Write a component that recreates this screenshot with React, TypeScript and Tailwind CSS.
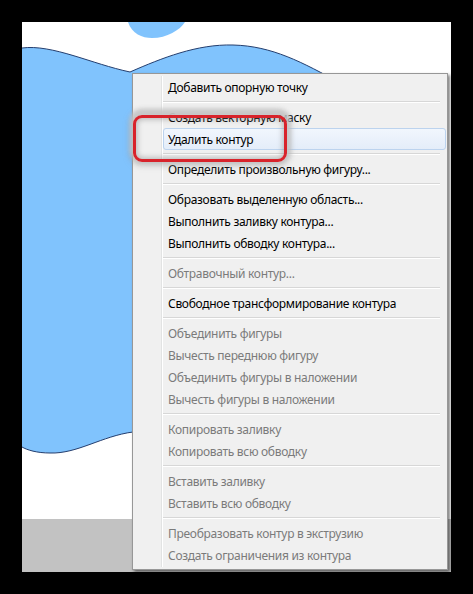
import React from "react"

type Item = { label: string; disabled?: boolean; active?: boolean } | "sep"

const items: Item[] = [
    { label: "Добавить опорную точку" },
    "sep",
    { label: "Создать векторную маску" },
    { label: "Удалить контур", active: true },
    "sep",
    { label: "Определить произвольную фигуру..." },
    "sep",
    { label: "Образовать выделенную область..." },
    { label: "Выполнить заливку контура..." },
    { label: "Выполнить обводку контура..." },
    "sep",
    { label: "Обтравочный контур...", disabled: true },
    "sep",
    { label: "Свободное трансформирование контура" },
    "sep",
    { label: "Объединить фигуры", disabled: true },
    { label: "Вычесть переднюю фигуру", disabled: true },
    { label: "Объединить фигуры в наложении", disabled: true },
    { label: "Вычесть фигуры в наложении", disabled: true },
    "sep",
    { label: "Копировать заливку", disabled: true },
    { label: "Копировать всю обводку", disabled: true },
    "sep",
    { label: "Вставить заливку", disabled: true },
    { label: "Вставить всю обводку", disabled: true },
    "sep",
    { label: "Преобразовать контур в экструзию", disabled: true },
    { label: "Создать ограничения из контура", disabled: true },
]

// фигура на холсте под меню
function Shapes() {
    return (
        <svg className="absolute inset-0" width="429" height="550" viewBox="0 0 429 550">
            <path d="M106,0 C110,12 120,16 130,16 C145,16 158,8 163,0 Z" fill="#80c3fd" />
            <path
                d="M0,26 C30,22 70,42 108,50 C140,36 175,22 211,23 C250,24 280,40 320,62 L340,75 L340,415 L111,410 C80,414 55,432 28,431 C15,431 5,428 0,425 Z"
                fill="#80c3fd"
            />
            <path
                d="M0,26 C30,22 70,42 108,50 C140,36 175,22 211,23 C250,24 280,40 320,62"
                fill="none"
                stroke="#243e6e"
                strokeWidth="1"
            />
            <path
                d="M111,410 C80,414 55,432 28,431 C15,431 5,428 0,425"
                fill="none"
                stroke="#243e6e"
                strokeWidth="1"
            />
        </svg>
    )
}

function MenuRow({ item }: { item: Exclude<Item, "sep"> }) {
    return (
        <div
            className={clsxLite(
                "h-[22px] flex items-center pl-[4px] pt-[2px] mr-[1px] rounded-[3px] border",
                item.active
                    ? "border-[#bcd3ee] bg-gradient-to-b from-[#f1f6fd] to-[#e4edf9]"
                    : "border-transparent"
            )}
        >
            <span className={clsxLite("whitespace-nowrap", item.disabled ? "text-[#7b7b7b]" : "text-black")}>
                {item.label}
            </span>
        </div>
    )
}

function clsxLite(...parts: string[]) {
    return parts.join(" ")
}

export default function App() {
    return (
        <div
            className="w-[473px] h-[594px] bg-black p-[22px]"
            style={{ fontFamily: '"Noto Sans", "Open Sans", sans-serif' }}
        >
            <div className="relative w-[429px] h-[550px] bg-white flex flex-col">
                <Shapes />
                <div className="flex-1" />
                <div className="h-[53px] bg-[#c2c2c2]" />

                {/* контекстное меню */}
                <div className="absolute left-[110px] top-[51px] w-[316px] flex border border-[#979797] bg-[#f0f0f0] py-[2px] pl-[1px] text-[12px] tracking-[-0.3px] shadow-[2px_2px_3px_rgba(0,0,0,0.5)]">
                    <div className="w-[28px] border-r border-[#e2e3e3] shadow-[1px_0_0_white]" />
                    <div className="flex-1 flex flex-col pl-[1px] pb-[1px]">
                        {items.map((item, i) =>
                            item === "sep" ? (
                                <div key={i} className="h-[8px] flex items-center pr-[7px]">
                                    <div className="w-full h-[2px] border-t border-[#d7d7d7] border-b border-b-white" />
                                </div>
                            ) : (
                                <MenuRow key={i} item={item} />
                            )
                        )}
                    </div>
                </div>

                {/* красная рамка-выделение */}
                <div className="absolute left-[111px] top-[93px] w-[154px] h-[47px] rounded-[9px] border-[3px] border-[#d8232b] shadow-[0_-3px_4px_3px_rgba(200,200,200,0.9),0_0_6px_3px_rgba(150,150,150,0.6),inset_0_0_5px_2px_rgba(130,130,130,0.45)]" />
            </div>
        </div>
    )
}
